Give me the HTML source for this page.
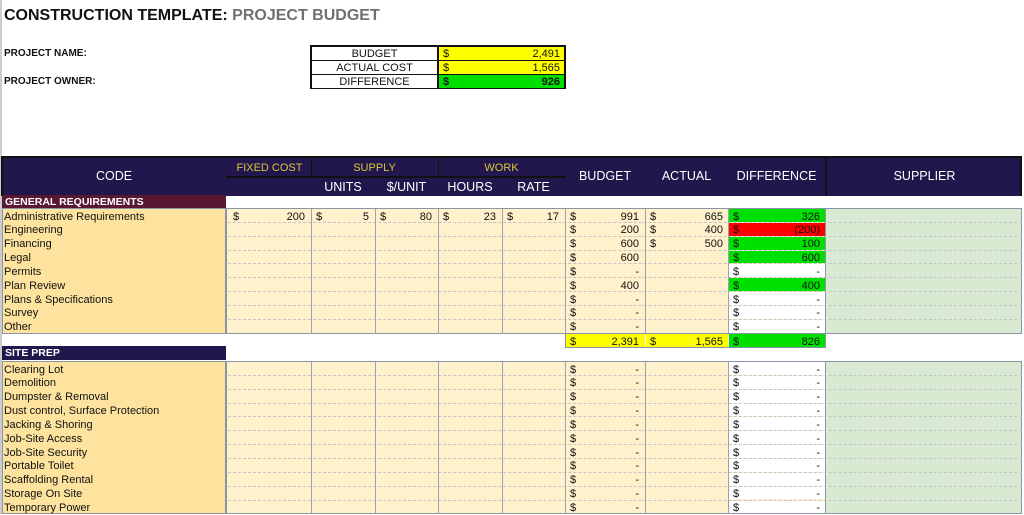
<!DOCTYPE html>
<html><head><meta charset="utf-8"><style>
body{margin:0;width:1024px;height:514px;background:#fff;position:relative;overflow:hidden;font-family:"Liberation Sans",Arial,sans-serif;}
div{position:absolute;box-sizing:border-box;}
.t{font-size:11px;color:#111;line-height:14px;white-space:nowrap}
.hd{color:#fff;font-size:12.5px;text-align:center}
.gold{color:#d9c63a;font-size:11px;text-align:center}
</style></head><body>
<div style="left:0;top:0;width:2px;height:514px;background:#ccc"></div>
<div style="left:4px;top:7px;font-size:16px;font-weight:bold;color:#111;white-space:nowrap">CONSTRUCTION TEMPLATE: <span style="color:#707070">PROJECT BUDGET</span></div>
<div class="t" style="left:4px;top:47px;font-weight:bold;font-size:10px">PROJECT NAME:</div>
<div class="t" style="left:4px;top:75px;font-weight:bold;font-size:10px">PROJECT OWNER:</div>
<div style="left:310px;top:45px;width:256px;height:44px;border:2px solid #111;background:#111"></div>
<div style="left:1px;top:156px;width:1021px;height:40px;background:#21174d;border:2px solid #111;border-bottom:none"></div>
<div style="left:226px;top:176px;width:340px;height:2px;background:#111"></div>
<div style="left:825px;top:156px;width:2px;height:40px;background:#111"></div>
<div class="hd" style="left:2px;top:169px;width:224px">CODE</div>
<div class="gold" style="left:228px;top:162px;width:83px">FIXED COST</div>
<div class="gold" style="left:311px;top:162px;width:127px">SUPPLY</div>
<div class="gold" style="left:438px;top:162px;width:127px">WORK</div>
<div style="left:311px;top:158px;width:1px;height:18px;background:#111"></div>
<div style="left:438px;top:158px;width:1px;height:18px;background:#111"></div>
<div class="hd" style="left:311px;top:180px;width:64px">UNITS</div>
<div class="hd" style="left:375px;top:180px;width:63px">$/UNIT</div>
<div class="hd" style="left:438px;top:180px;width:64px">HOURS</div>
<div class="hd" style="left:502px;top:180px;width:63px">RATE</div>
<div class="hd" style="left:565px;top:169px;width:80px">BUDGET</div>
<div class="hd" style="left:645px;top:169px;width:83px">ACTUAL</div>
<div class="hd" style="left:728px;top:169px;width:97px">DIFFERENCE</div>
<div class="hd" style="left:827px;top:169px;width:195px">SUPPLIER</div>
<div style="left:2px;top:195px;width:224px;height:13px;background:#5a1732;color:#fff;font-weight:bold;font-size:10.5px;padding-left:3px;line-height:14px">GENERAL REQUIREMENTS</div>
<div style="left:2px;top:346px;width:224px;height:14px;background:#21174d;color:#fff;font-weight:bold;font-size:10.5px;padding-left:3px;line-height:15px">SITE PREP</div>
<div id="g"></div>
<script>
var cols=[[228,311],[311,375],[375,438],[438,502],[502,565],[565,645],[645,728],[728,825],[825,1022]];
var h='';
function cell(x,y,w,hh,bg,extra){return '<div style="left:'+x+'px;top:'+y+'px;width:'+w+'px;height:'+hh+'px;background:'+bg+';'+(extra||'')+'"></div>';}
function txt(x,y,w,s,al,c,b){return '<div class="t" style="left:'+x+'px;top:'+(y+1.5)+'px;width:'+w+'px;text-align:'+al+';color:'+(c||'#111')+';'+(b?'font-weight:bold;':'')+'">'+s+'</div>';}
var sm=[['BUDGET','2,491','#ffff00',0],['ACTUAL COST','1,565','#ffff00',0],['DIFFERENCE','926','#00e000',1]];
sm.forEach(function(r,i){var y=47+i*14;h+=cell(312,y,125,13,'#fff');h+=cell(439,y,125,13,r[2]);
h+=txt(312,y-1.5,125,r[0],'center');h+=txt(443,y-1.5,20,'$','left','#111',r[3]);h+=txt(460,y-1.5,100,r[1],'right','#111',r[3]);});
function block(top,n,names,data){
 var p=13.85;
 h+=cell(2,top,224,n*p+1,'#fde39e','border:1px solid #8a95a8');
 h+=cell(226,top,600,n*p+1,'#fff1cc','border:1px solid #8a95a8');
 h+=cell(825,top,197,n*p+1,'#d9ead3','border:1px solid #8a95a8');
 for(var i=0;i<n;i++){var y=top+i*p;
  h+=txt(4,y,220,names[i],'left');
  if(i>0){h+=cell(228,y,794,1,'transparent','border-top:1px dashed #c9c3c8');}
  var d=data[i]||{};
  var dc=d.dc||'#fff';
  h+=cell(729,y+1,96,p-1,dc);
  h+=txt(570,y,12,'$','left');h+=txt(575,y,64,d.b||'-','right');
  if(d.a){h+=txt(650,y,12,'$','left');h+=txt(655,y,68,d.a,'right');}
  h+=txt(733,y,12,'$','left');h+=txt(740,y,80,d.d||'-','right');
  if(d.f){var v=d.f;for(var k=0;k<5;k++){h+=txt(cols[k][0]+5,y,12,'$','left');h+=txt(cols[k][0],y,cols[k][1]-cols[k][0]-6,v[k],'right');}}
 }
 for(var k=1;k<8;k++){h+=cell(cols[k][0],top+1,1,n*p,'#9aa3b4');}
}
var g=['Administrative Requirements','Engineering','Financing','Legal','Permits','Plan Review','Plans &amp; Specifications','Survey','Other'];
var G='#00e000';
block(208,9,g,[{f:['200','5','80','23','17'],b:'991',a:'665',d:'326',dc:G},{b:'200',a:'400',d:'(200)',dc:'#ff0000'},{b:'600',a:'500',d:'100',dc:G},{b:'600',d:'600',dc:G},{},{b:'400',d:'400',dc:G},{},{},{}]);
h+=cell(566,334,79,13,'#ffff00');h+=cell(646,334,82,13,'#ffff00');h+=cell(729,334,96,13,G);
h+=cell(565,333,261,15,'transparent','border:1px solid #8a95a8');
h+=txt(570,333,12,'$','left');h+=txt(575,333,64,'2,391','right');
h+=txt(650,333,12,'$','left');h+=txt(655,333,68,'1,565','right');
h+=txt(733,333,12,'$','left');h+=txt(740,333,80,'826','right');
var s=['Clearing Lot','Demolition','Dumpster &amp; Removal','Dust control, Surface Protection','Jacking &amp; Shoring','Job-Site Access','Job-Site Security','Portable Toilet','Scaffolding Rental','Storage On Site','Temporary Power'];
block(361,11,s,[]);
document.getElementById('g').outerHTML=h;
</script>
</body></html>
